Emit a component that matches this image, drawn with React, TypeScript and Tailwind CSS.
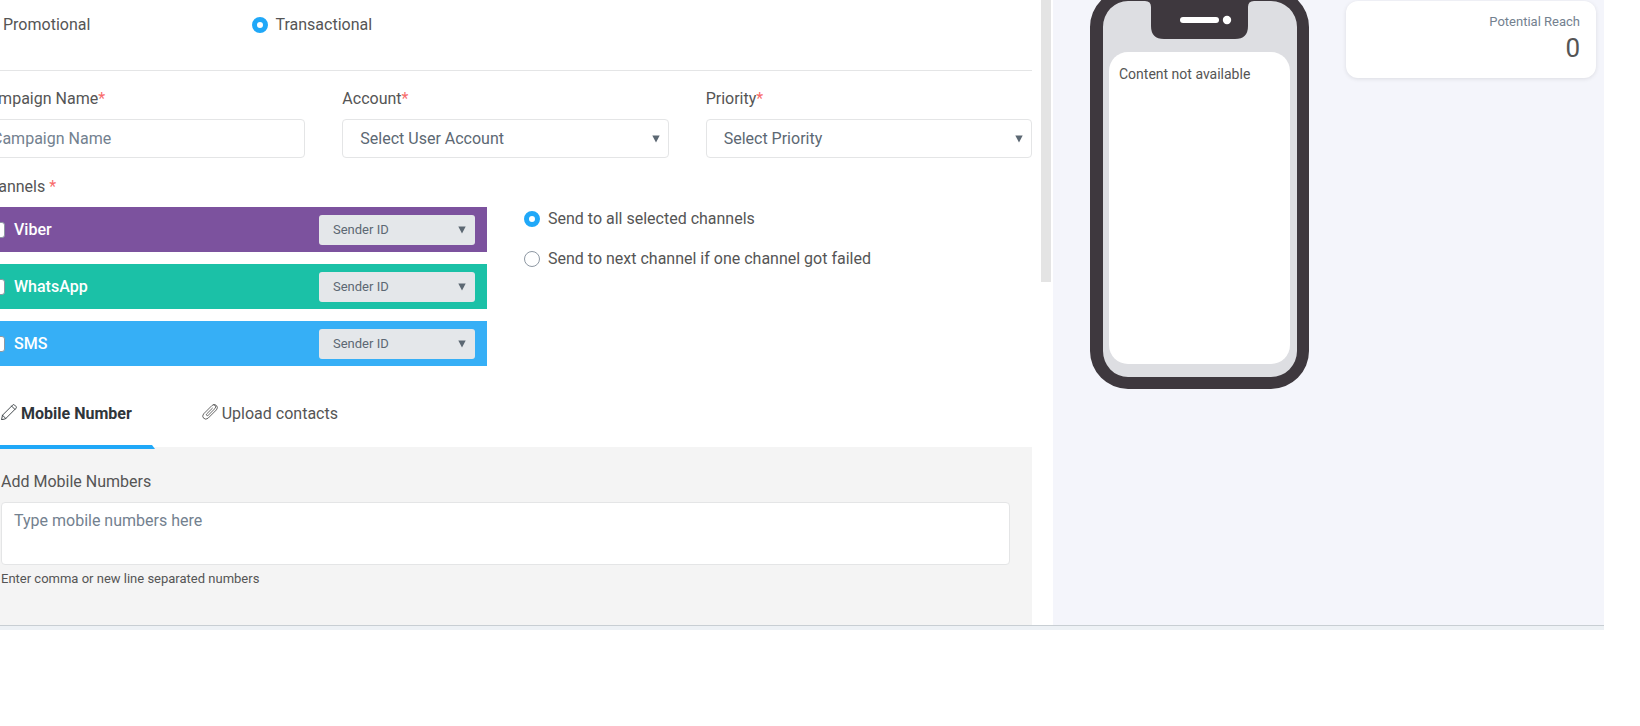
import React, { useState } from 'react';

interface Channel {
  id: string;
  name: string;
  color: string;
}

const CHANNELS: Channel[] = [
  { id: 'viber', name: 'Viber', color: 'bg-[#7c529e]' },
  { id: 'whatsapp', name: 'WhatsApp', color: 'bg-[#1bc1a7]' },
  { id: 'sms', name: 'SMS', color: 'bg-[#36aff6]' },
];

const PencilIcon = () => (
  <svg className="mb-1 size-4 shrink-0" viewBox="0 0 16 16" fill="none" stroke="currentColor" strokeWidth="0.9" strokeLinejoin="round" strokeLinecap="round">
    <path d="M0.6 15.4 L1.5 11.2 L11.8 0.9 Q12.6 0.3 13.4 0.9 L15.1 2.6 Q15.7 3.4 15.1 4.2 L4.8 14.5 Z" />
    <path d="M1.5 11.2 L4.8 14.5 M10.6 2.1 L13.9 5.4" />
  </svg>
);

const ClipIcon = () => (
  <svg className="mb-1 size-4 shrink-0" viewBox="0 0 16 16" fill="none" stroke="currentColor" strokeWidth="0.9" strokeLinejoin="round" strokeLinecap="round">
    <path d="M10.4 4.2 L4.7 9.9 Q4 10.8 4.7 11.4 Q5.4 12 6.2 11.3 L13 4.5 Q14.4 2.8 13.2 1.4 Q11.8 0 10.1 1.4 L1.6 9.9 Q-0.3 12.2 1.6 14.2 Q3.8 16.2 6.1 14.2 L14.4 5.9 Q16.2 3.8 14.8 1.9 Q13.6 0.3 11.6 0.6" />
  </svg>
);

const Arrow = () => (
  <svg className="pointer-events-none absolute right-[9px] top-1/2 -mt-1 h-2 w-2" viewBox="0 0 8 8" fill="#5c6873">
    <path d="M0.3 0.5 H7.7 L4 7.5 Z" />
  </svg>
);

interface RadioProps {
  name: string;
  label: string;
  checked: boolean;
  onChange: () => void;
}

const Radio = ({ name, label, checked, onChange }: RadioProps) => (
  <label className="flex items-center gap-2 leading-6">
    <input
      type="radio"
      name={name}
      checked={checked}
      onChange={onChange}
      className="size-4 shrink-0 appearance-none rounded-full border border-[#8e98a3] bg-white checked:border-[5px] checked:border-[#20a8f8]"
    />
    {label}
  </label>
);

interface SelectFieldProps {
  id: string;
  label: string;
  placeholder: string;
}

const SelectField = ({ id, label, placeholder }: SelectFieldProps) => (
  <div>
    <label htmlFor={id} className="mb-2 block leading-6">
      {label}
      <span className="text-[#f86c6b]">*</span>
    </label>
    <div className="relative">
      <select id={id} className="h-[39px] w-full appearance-none rounded border border-[#e4e5e6] bg-white px-[17px] text-[#5c6873]">
        <option>{placeholder}</option>
      </select>
      <Arrow />
    </div>
  </div>
);

const ChannelRow = ({ channel }: { channel: Channel }) => (
  <div className={`flex h-[45px] items-center justify-between pl-[10px] pr-3 ${channel.color}`}>
    <label className="flex items-center gap-[9px] font-medium text-white">
      <input type="checkbox" className="size-4 appearance-none rounded-[3px] border border-[#8e98a3] bg-white checked:bg-[#20a8f8]" />
      {channel.name}
    </label>
    <div className="relative w-[156px]">
      <select aria-label={`${channel.name} sender`} disabled className="h-[30px] w-full appearance-none rounded-[3px] bg-[#e4e7ea] px-[14px] text-[13px] text-[#5c6873] opacity-100">
        <option>Sender ID</option>
      </select>
      <Arrow />
    </div>
  </div>
);

const PhonePreview = () => (
  <div className="relative h-[400px] w-[219px] shrink-0 rounded-[38px] border-12 border-l-13 border-[#3e383e] bg-[#dddee2] pl-[6px] pr-[7px] pt-[51px] pb-[13px]">
    <svg className="absolute left-[42px] top-0 h-[38px] w-[109px]" viewBox="0 0 109 38">
      <path d="M0 0 H109 Q103 0 103 6 V25 Q103 38 90 38 H19 Q6 38 6 25 V6 Q6 0 0 0 Z" fill="#3e383e" />
      <rect x="35" y="16" width="39" height="6" rx="3" fill="#fff" />
      <circle cx="82" cy="19" r="4.2" fill="#fff" />
    </svg>
    <div className="h-full rounded-[19px] bg-white px-[10px] py-3 text-sm leading-5">Content not available</div>
  </div>
);

function App() {
  const [messageType, setMessageType] = useState('transactional');
  const [delivery, setDelivery] = useState('all');
  const [tab, setTab] = useState('mobile');

  return (
    <div className="overflow-hidden bg-white font-[Roboto,sans-serif] text-base text-[#555]">
      <div className="-ml-[21px] mr-9 flex border-b-4 border-[#edf1f5]">
        <main className="flex min-w-0 flex-1 border-b border-[#c8ced3]">
          <form className="min-w-0 flex-1">
            <div className="grid grid-cols-4 gap-[37px] border-b border-[#e4e5e6] pb-[33px] pt-[13px]">
              <Radio name="type" label="Promotional" checked={messageType === 'promotional'} onChange={() => setMessageType('promotional')} />
              <Radio name="type" label="Transactional" checked={messageType === 'transactional'} onChange={() => setMessageType('transactional')} />
            </div>

            <div className="mt-4 grid grid-cols-3 gap-[37px]">
              <div>
                <label htmlFor="name" className="mb-2 block leading-6">
                  Campaign Name<span className="text-[#f86c6b]">*</span>
                </label>
                <input id="name" type="text" placeholder="Campaign Name" className="h-[39px] w-full rounded border border-[#e4e5e6] px-3 placeholder:text-[#73818f]" />
              </div>
              <SelectField id="account" label="Account" placeholder="Select User Account" />
              <SelectField id="priority" label="Priority" placeholder="Select Priority" />
            </div>

            <div className="mt-[17px] leading-6">
              Channels <span className="text-[#f86c6b]">*</span>
            </div>
            <div className="mt-2 grid grid-cols-2 gap-[37px]">
              <div className="flex flex-col gap-3">
                {CHANNELS.map(channel => (
                  <ChannelRow key={channel.id} channel={channel} />
                ))}
              </div>
              <div className="flex flex-col gap-4">
                <Radio name="delivery" label="Send to all selected channels" checked={delivery === 'all'} onChange={() => setDelivery('all')} />
                <Radio name="delivery" label="Send to next channel if one channel got failed" checked={delivery === 'next'} onChange={() => setDelivery('next')} />
              </div>
            </div>

            <div className="mt-6 flex gap-[25px]">
              <button
                type="button"
                onClick={() => setTab('mobile')}
                className={`relative z-10 -mb-0.5 flex h-[59px] items-center gap-1 border-r-3 border-b-4 border-r-transparent pb-2 pl-[22px] pr-5 ${tab === 'mobile' ? 'border-b-[#20a8f8] font-bold text-[#2f353a]' : 'border-b-transparent'}`}
              >
                <PencilIcon />
                Mobile Number
              </button>
              <button
                type="button"
                onClick={() => setTab('upload')}
                className={`relative z-10 -mb-0.5 flex h-[59px] items-center gap-1 border-r-3 border-b-4 border-r-transparent pb-2 pl-[22px] pr-5 ${tab === 'upload' ? 'border-b-[#20a8f8] font-bold text-[#2f353a]' : 'border-b-transparent'}`}
              >
                <ClipIcon />
                Upload contacts
              </button>
            </div>

            <div className="bg-[#f4f4f4] px-[22px] pb-9 pt-[23px]">
              <label htmlFor="numbers" className="mb-2 block leading-6">Add Mobile Numbers</label>
              <textarea
                id="numbers"
                placeholder="Type mobile numbers here"
                className="block h-[63px] w-full resize-none rounded border border-[#e4e5e6] bg-white px-3 py-1.5 leading-6 placeholder:text-[#73818f]"
              />
              <p className="mt-1 text-[13px] leading-5">Enter comma or new line separated numbers</p>
            </div>
          </form>
          <div className="ml-[9px] mr-0.5 w-[10px]">
            <div className="h-[282px] bg-[#e4e4e4]" />
          </div>
        </main>

        <aside className="flex w-[551px] items-start border-b border-[#c8ced3] bg-[#f4f5fb] pl-[37px] pr-2">
          <div className="-mt-[11px] mr-[37px]">
            <PhonePreview />
          </div>
          <div className="mt-px h-[77px] flex-1 rounded-xl bg-white px-4 py-[11px] text-right shadow-[0_1px_4px_rgba(0,0,0,0.1)]">
            <div className="text-[13px] leading-5 text-[#73818f]">Potential Reach</div>
            <div className="text-[26px] leading-8">0</div>
          </div>
        </aside>
      </div>
    </div>
  );
}

export default App;
